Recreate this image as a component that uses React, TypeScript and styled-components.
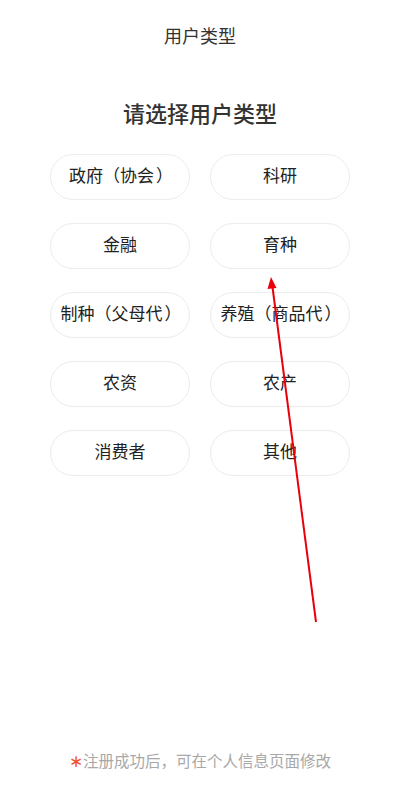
import React from "react";
import styled, { createGlobalStyle } from "styled-components";

const Global = createGlobalStyle`
  html, body { margin: 0; padding: 0; background: #fff; }
  body {
    font-family: "Noto Sans CJK SC", "Noto Sans", sans-serif;
  }
  * { box-sizing: border-box; }
`;

const Page = styled.div`
  position: relative;
  width: 400px;
  min-height: 800px;
  display: flex;
  flex-direction: column;
  align-items: center;
  background: #fff;
`;

const Header = styled.header`
  height: 72px;
  width: 100%;
  padding-bottom: 2px;
  display: flex;
  align-items: center;
  justify-content: center;
  font-size: 18px;
  color: #333;
`;

const Heading = styled.h1`
  margin: 25px 0 0;
  font-size: 22px;
  line-height: 30px;
  font-weight: 500;
  color: #333;
`;

const Grid = styled.div`
  margin-top: 27px;
  display: grid;
  grid-template-columns: 140px 140px;
  grid-auto-rows: 46px;
  column-gap: 20px;
  row-gap: 23px;
`;

const Option = styled.button`
  border: 1px solid #ececec;
  border-radius: 23px;
  background: #fff;
  font-family: inherit;
  font-size: 17px;
  color: #222;
  padding: 0 0 5px;
  display: flex;
  align-items: center;
  justify-content: center;
  white-space: nowrap;
  cursor: pointer;
`;

const Paren = styled.span<{ $side: "open" | "close" }>`
  display: inline-block;
  width: 1em;
  text-align: ${(p) => (p.$side === "open" ? "right" : "left")};
  padding: ${(p) => (p.$side === "open" ? "0 0.12em 0 0" : "0 0 0 0.12em")};
`;

const Footer = styled.div`
  margin-top: auto;
  padding-bottom: 29px;
  font-size: 15.5px;
  line-height: 22px;
  color: #a8a8a8;
`;

const Star = styled.span`
  color: #f0532c;
  font-size: 17px;
`;

const Overlay = styled.svg`
  position: absolute;
  left: 0;
  top: 0;
  pointer-events: none;
`;

const options: { main: string; sub?: string }[] = [
  { main: "政府", sub: "协会" },
  { main: "科研" },
  { main: "金融" },
  { main: "育种" },
  { main: "制种", sub: "父母代" },
  { main: "养殖", sub: "商品代" },
  { main: "农资" },
  { main: "农产" },
  { main: "消费者" },
  { main: "其他" },
];

export default function App() {
  return (
    <>
      <Global />
      <Page lang="zh-CN">
        <Header>用户类型</Header>
        <Heading>请选择用户类型</Heading>
        <Grid>
          {options.map((o) => (
            <Option key={o.main}>
              <span>
                {o.main}
                {o.sub && (
                  <>
                    <Paren $side="open">（</Paren>
                    {o.sub}
                    <Paren $side="close">）</Paren>
                  </>
                )}
              </span>
            </Option>
          ))}
        </Grid>
        <Footer>
          <Star>∗</Star>注册成功后，可在个人信息页面修改
        </Footer>
        <Overlay width="400" height="800" viewBox="0 0 400 800">
          <line x1="316" y1="622" x2="272.5" y2="287" stroke="#e8000b" strokeWidth="2" />
          <polygon points="271,277 267.5,289 276.5,288" fill="#e8000b" />
        </Overlay>
      </Page>
    </>
  );
}
